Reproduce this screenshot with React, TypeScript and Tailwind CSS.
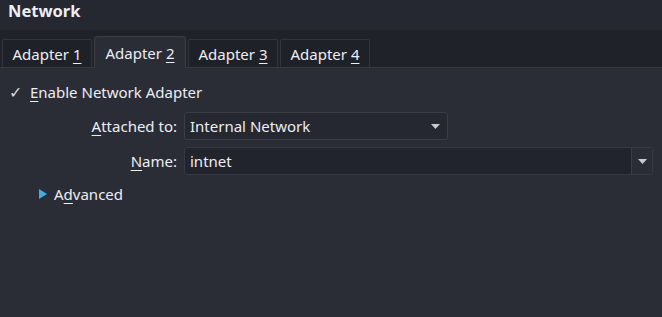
import React from 'react';

const U = ({ children }: { children: React.ReactNode }) => (
  <span className="underline underline-offset-[3px] decoration-1">{children}</span>
);

const tabs = ['1', '2', '3', '4'];

const Caret = () => (
  <svg width="9" height="5" viewBox="0 0 9 5" className="text-[#c8cad0]">
    <path d="M0 0 H9 L4.5 5 Z" fill="currentColor" />
  </svg>
);

export default function App() {
  return (
    <div
      className="w-[662px] h-[317px] bg-[#2a2c36] text-[#eceef2] text-[15px] overflow-hidden"
      style={{ fontFamily: '"Noto Sans", "Open Sans", sans-serif' }}
    >
      {/* title */}
      <div className="h-[30px] bg-[#252731] pl-[8px] pt-[1px] font-bold text-[16.5px] leading-[20px]">
        Network
      </div>

      {/* tab strip */}
      <div className="h-[38px] bg-[#20222a] flex items-end pl-[2px] gap-[2px] border-b border-[#363842]">
        {tabs.map((k, i) => {
          const active = i === 1;
          return (
            <div
              key={k}
              className={
                active
                  ? 'h-[32px] -mb-px w-[92px] pt-[5px] text-center bg-[#2a2c36] border border-b-0 border-[#3c3e48] rounded-t-[3px]'
                  : 'h-[28px] w-[90px] pt-[3px] text-center bg-[#1f2129] border border-b-0 border-[#33353e] rounded-t-[2px]'
              }
            >
              <span>Adapter </span>
              <U>{k}</U>
            </div>
          );
        })}
      </div>

      {/* content */}
      <div className="pt-[14px]">
        <div className="flex items-center h-[20px] pl-[9px]">
          <span className="w-[16px] text-[16px] text-[#d8dade]">✓</span>
          <span className="ml-[5px]">
            <U>E</U>nable Network Adapter
          </span>
        </div>

        <div className="mt-[10px] flex items-center h-[28px]">
          <div className="w-[178px] text-right pr-[1px]">
            <U>A</U>ttached to:
          </div>
          <div className="ml-[6px] w-[264px] h-[28px] flex items-center justify-between px-[5px] pr-[7px] bg-[#252731] border border-[#3a3c46] rounded-[3px]">
            <span>Internal Network</span>
            <Caret />
          </div>
        </div>

        <div className="mt-[7px] flex items-center h-[28px]">
          <div className="w-[178px] text-right pr-[1px]">
            <U>N</U>ame:
          </div>
          <div className="ml-[6px] w-[469px] h-[28px] flex items-stretch bg-[#22242d] border border-[#363842] rounded-[3px]">
            <span className="flex-1 flex items-center px-[5px]">intnet</span>
            <div className="w-[21px] flex items-center justify-center bg-[#2a2c36] border-l border-[#3a3c46] rounded-r-[3px]">
              <Caret />
            </div>
          </div>
        </div>

        <div className="mt-[8px] flex items-center h-[22px] pl-[39px]">
          <svg width="9" height="10" viewBox="0 0 9 10">
            <path d="M0 0 L8 5 L0 10 Z" fill="#3daee9" />
          </svg>
          <span className="ml-[6px]">
            A<U>d</U>vanced
          </span>
        </div>
      </div>
    </div>
  );
}
